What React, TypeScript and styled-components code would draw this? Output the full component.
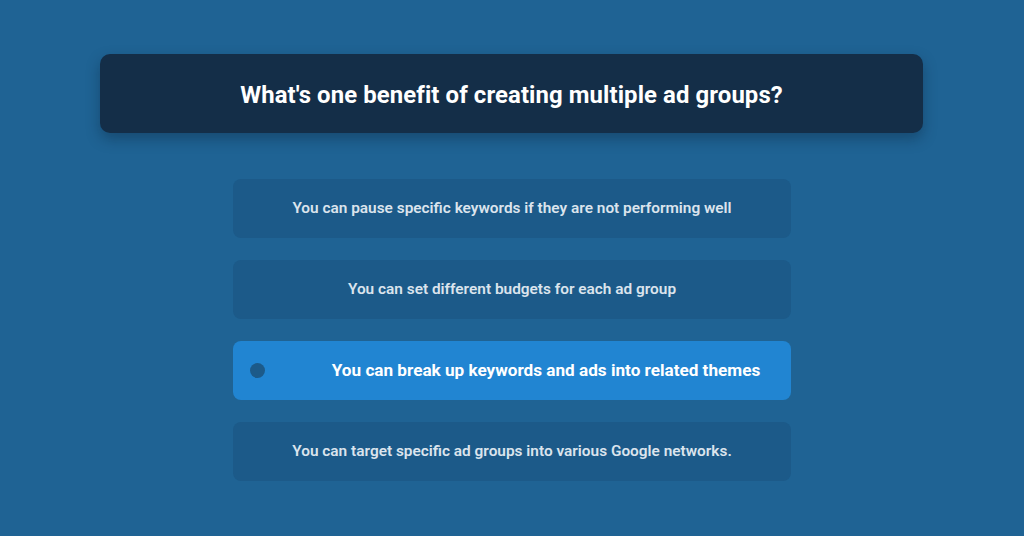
import React from "react";
import styled, { createGlobalStyle } from "styled-components";

const GlobalStyle = createGlobalStyle`
  html, body {
    margin: 0;
    padding: 0;
    background: #1f6394;
  }
  body {
    font-family: Roboto, "Noto Sans", "Liberation Sans", sans-serif;
    -webkit-font-smoothing: antialiased;
  }
`;

const Page = styled.main`
  width: 1024px;
  height: 536px;
  box-sizing: border-box;
  padding-top: 54px;
  display: flex;
  flex-direction: column;
  align-items: center;
  background: #1f6394;
  overflow: hidden;
`;

const QuestionCard = styled.header`
  width: 823px;
  height: 79px;
  margin-left: -1px;
  box-sizing: border-box;
  border-radius: 10px;
  background: #142e48;
  box-shadow: 0 6px 14px rgba(10, 30, 50, 0.35);
  display: flex;
  align-items: center;
  justify-content: center;
`;

const QuestionText = styled.h1`
  margin: 0;
  color: #ffffff;
  font-size: 23.9px;
  font-weight: 700;
  letter-spacing: 0.1px;
  padding-top: 3px;
`;

const OptionList = styled.ul`
  list-style: none;
  margin: 46px 0 0;
  padding: 0;
  width: 558px;
  display: flex;
  flex-direction: column;
  gap: 22px;
`;

const Option = styled.li<{ $selected?: boolean }>`
  position: relative;
  height: 59px;
  border-radius: 8px;
  background: ${(p) => (p.$selected ? "#2185d2" : "#1c5a89")};
  display: flex;
  align-items: center;
  justify-content: center;
  padding: ${(p) => (p.$selected ? "0 0 0 68px" : "0")};
  box-sizing: border-box;
`;

const OptionText = styled.span<{ $selected?: boolean }>`
  color: ${(p) => (p.$selected ? "#ffffff" : "#dbe4ed")};
  font-size: ${(p) => (p.$selected ? "17.15px" : "15.4px")};
  font-weight: ${(p) => (p.$selected ? 700 : 600)};
  padding-bottom: 1px;
`;

const SelectedDot = styled.span`
  position: absolute;
  left: 17px;
  top: 50%;
  width: 15px;
  height: 15px;
  margin-top: -8px;
  border-radius: 50%;
  background: #1c5a89;
`;

const options = [
  "You can pause specific keywords if they are not performing well",
  "You can set different budgets for each ad group",
  "You can break up keywords and ads into related themes",
  "You can target specific ad groups into various Google networks.",
];

const selectedIndex = 2;

export default function App() {
  return (
    <>
      <GlobalStyle />
      <Page>
        <QuestionCard>
          <QuestionText>What's one benefit of creating multiple ad groups?</QuestionText>
        </QuestionCard>
        <OptionList>
          {options.map((text, i) => {
            const selected = i === selectedIndex;
            return (
              <Option key={text} $selected={selected}>
                {selected && <SelectedDot />}
                <OptionText $selected={selected}>{text}</OptionText>
              </Option>
            );
          })}
        </OptionList>
      </Page>
    </>
  );
}
